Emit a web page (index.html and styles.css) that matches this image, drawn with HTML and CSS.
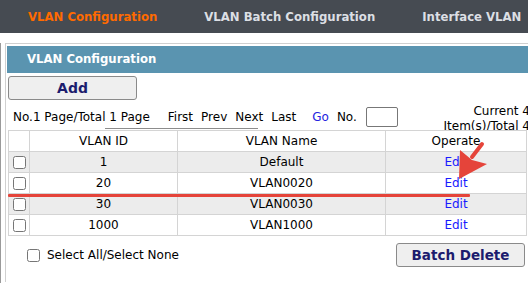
FILE: index.html
```html
<!DOCTYPE html>
<html lang="en">
<head>
  <meta charset="UTF-8" />
  <title>VLAN Configuration</title>
  <link rel="stylesheet" href="styles.css">
</head>
<body>

  <div class="topbar">
    <span class="tab active">VLAN Configuration</span>
    <span class="tab">VLAN Batch Configuration</span>
    <span class="tab">Interface VLAN</span>
  </div>

  <div class="main">
    <div class="panel">
      <div class="panel-title">VLAN Configuration</div>
      <div class="panel-body">
        <button class="btn btn-add">Add</button>

        <div class="pager">
          <span class="page-info">No.1 Page/Total 1 Page</span>
          <a class="page-link first">First</a>
          <a class="page-link">Prev</a>
          <a class="page-link">Next</a>
          <a class="page-link">Last</a>
          <a class="go">Go</a>
          <span class="no">No.</span>
          <input class="page-input" type="text">
          <span class="count">Current 4<br>Item(s)/Total 4</span>
          <span class="pager-rule"></span>
        </div>

        <table class="vlan-table">
          <colgroup>
            <col class="c-check">
            <col class="c-id">
            <col class="c-name">
            <col class="c-op">
          </colgroup>
          <tr>
            <th></th>
            <th>VLAN ID</th>
            <th>VLAN Name</th>
            <th>Operate</th>
          </tr>
          <tr class="alt">
            <td><input type="checkbox"></td>
            <td>1</td>
            <td>Default</td>
            <td><a class="edit">Edit</a></td>
          </tr>
          <tr>
            <td><input type="checkbox"></td>
            <td>20</td>
            <td>VLAN0020</td>
            <td><a class="edit">Edit</a></td>
          </tr>
          <tr class="alt">
            <td><input type="checkbox"></td>
            <td>30</td>
            <td>VLAN0030</td>
            <td><a class="edit">Edit</a></td>
          </tr>
          <tr>
            <td><input type="checkbox"></td>
            <td>1000</td>
            <td>VLAN1000</td>
            <td><a class="edit">Edit</a></td>
          </tr>
        </table>

        <div class="footer">
          <label class="select-all"><input type="checkbox">Select All/Select None</label>
          <button class="btn btn-batch">Batch Delete</button>
        </div>
      </div>
    </div>
  </div>

  <!-- red markup drawn over the screenshot -->
  <svg class="annotation" width="528" height="283" viewBox="0 0 528 283">
    <rect x="8" y="194" width="462" height="3" rx="1" fill="#e5443a"/>
    <line x1="482" y1="144" x2="472" y2="157" stroke="#e5443a" stroke-width="4" stroke-linecap="round"/>
    <polygon points="460,150 472,160 487,164 459,179" fill="#e5443a"/>
  </svg>

</body>
</html>
```

FILE: styles.css
```css
html, body {
  overflow: hidden;
}

body {
  margin: 0;
  position: relative;
  height: 283px;
  font-family: "DejaVu Sans", Verdana, sans-serif;
  font-size: 12px;
  color: #000;
  background-color: #fff;
}

.topbar {
  height: 33px;
  background-color: #464b52;
  display: flex;
  align-items: center;
  gap: 47px;
  padding-left: 28px;
  white-space: nowrap;
}

.tab {
  font-weight: bold;
  font-size: 11.7px;
  color: #dcdfe4;
}

.tab.active {
  color: #ff6a00;
}

.main {
  margin-top: 10px;
  border-left: 1px solid #9a9a9a;
  padding-left: 4px;
  height: 240px;
}

.panel {
  width: 600px;
  min-height: 236px;
  margin-top: 1px;
  border-left: 1px solid #d0d0d0;
  border-top: 1px solid #d0d0d0;
  padding: 2px 0 0 1px;
}

.panel-title {
  height: 27px;
  line-height: 27px;
  background-color: #5a94b0;
  color: #fff;
  font-weight: bold;
  font-size: 11.7px;
  padding-left: 20px;
}

.panel-body {
  padding-left: 1px;
}

.btn {
  display: block;
  width: 129px;
  height: 24px;
  padding: 0;
  background-color: #efefef;
  border: 1px solid #8a8a8a;
  border-radius: 3px;
  font-family: inherit;
  font-weight: bold;
  color: #1c1c6e;
}

.btn-add {
  margin-top: 3px;
  font-size: 14px;
}

.btn-batch {
  margin-left: auto;
  font-size: 13.5px;
}

.pager {
  position: relative;
  display: flex;
  align-items: center;
  width: 517px;
  height: 20px;
  margin-top: 7px;
  padding-left: 5px;
  white-space: nowrap;
}

.page-link {
  margin-left: 8px;
  color: #000;
}

.page-link.first {
  margin-left: 18px;
}

.go {
  margin-left: 16px;
  color: #2323e0;
}

.no {
  margin-left: 8px;
}

.page-input {
  margin-left: 9px;
  width: 32px;
  height: 20px;
  box-sizing: border-box;
  padding: 0;
  border: 1px solid #777;
  border-radius: 2px;
}

.count {
  margin-left: auto;
  align-self: flex-start;
  margin-top: -3px;
  text-align: right;
  line-height: 15px;
}

.pager-rule {
  position: absolute;
  left: 97px;
  top: 21px;
  width: 153px;
  border-top: 1px solid #8c8c8c;
}

.vlan-table {
  position: relative;
  margin-top: 3px;
  width: 519px;
  table-layout: fixed;
  border-collapse: collapse;
  background-color: #fff;
}

.c-check { width: 21px; }
.c-id { width: 148px; }
.c-name { width: 208px; }
.c-op { width: 141px; }

.vlan-table th,
.vlan-table td {
  height: 20px;
  padding: 0;
  border: 1px solid #d4d4d4;
  text-align: center;
  font-weight: normal;
}

.vlan-table tr.alt td {
  background-color: #ececec;
}

input[type="checkbox"] {
  width: 13px;
  height: 13px;
  margin: 0;
  vertical-align: middle;
}

.edit {
  color: #1a1aff;
}

.footer {
  display: flex;
  align-items: center;
  width: 517px;
  margin-top: 7px;
}

.select-all {
  padding-left: 19px;
}

.select-all input {
  margin-right: 7px;
}

.annotation {
  position: absolute;
  top: 0;
  left: 0;
  pointer-events: none;
}
```
